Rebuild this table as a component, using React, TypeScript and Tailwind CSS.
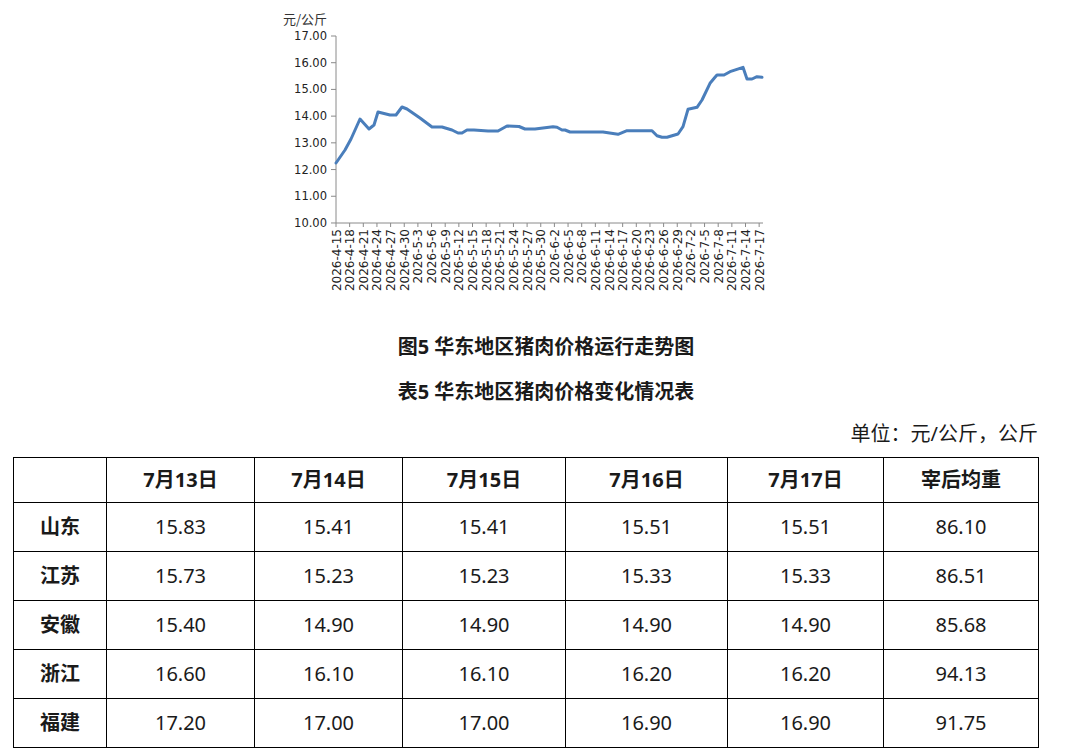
import React from "react";

const linePoints: [number, number][] = [
  [336, 163], [345, 150], [351, 139], [360, 119], [369, 129], [374, 125], [378, 112],
  [390, 115], [396, 115], [402, 107], [407, 109], [420, 118], [432, 127], [442, 127],
  [452, 130], [458, 133], [462, 133], [467, 130], [474, 130], [488, 131], [498, 131],
  [507, 126], [519, 126.5], [525, 129], [535, 129], [553, 126.7], [557, 127.3], [562, 130],
  [565, 130], [570, 132], [603, 132], [618, 134.3], [627, 130.7], [652, 130.7], [657, 135.7],
  [662, 137.3], [667, 137.3], [678, 134], [683, 126.7], [688, 109.3], [697, 107.3], [702, 100],
  [710, 83.3], [715, 77.3], [717, 75], [724, 75], [730, 71.7], [743, 67.3], [747, 79],
  [752, 79], [757, 76.7], [762, 77.3],
];

const yTicks = ["17.00", "16.00", "15.00", "14.00", "13.00", "12.00", "11.00", "10.00"];

const xLabels = [
  "2026-4-15", "2026-4-18", "2026-4-21", "2026-4-24", "2026-4-27", "2026-4-30",
  "2026-5-3", "2026-5-6", "2026-5-9", "2026-5-12", "2026-5-15", "2026-5-18",
  "2026-5-21", "2026-5-24", "2026-5-27", "2026-5-30", "2026-6-2", "2026-6-5",
  "2026-6-8", "2026-6-11", "2026-6-14", "2026-6-17", "2026-6-20", "2026-6-23",
  "2026-6-26", "2026-6-29", "2026-7-2", "2026-7-5", "2026-7-8", "2026-7-11",
  "2026-7-14", "2026-7-17",
];

const headers = ["7月13日", "7月14日", "7月15日", "7月16日", "7月17日", "宰后均重"];

const rows = [
  { name: "山东", values: ["15.83", "15.41", "15.41", "15.51", "15.51", "86.10"] },
  { name: "江苏", values: ["15.73", "15.23", "15.23", "15.33", "15.33", "86.51"] },
  { name: "安徽", values: ["15.40", "14.90", "14.90", "14.90", "14.90", "85.68"] },
  { name: "浙江", values: ["16.60", "16.10", "16.10", "16.20", "16.20", "94.13"] },
  { name: "福建", values: ["17.20", "17.00", "17.00", "16.90", "16.90", "91.75"] },
];

const colWidths = ["w-[148px]", "w-[148px]", "w-[163px]", "w-[162px]", "w-[156px]", "w-[155px]"];

const PriceChart = () => {
  const axisFont = "'DejaVu Sans', 'Noto Sans CJK SC', sans-serif";
  return (
    <svg width={500} height={300} viewBox="270 0 500 300" className="block">
      <text x={327} y={24} textAnchor="end" fontSize={13} fill="#333" fontFamily="'Noto Sans CJK SC', sans-serif">
        元/公斤
      </text>
      {yTicks.map((label, i) => {
        const y = 36 + i * 26.71;
        return (
          <g key={label}>
            <line x1={331} y1={y} x2={336} y2={y} stroke="#8a8a8a" strokeWidth={1} />
            <text x={327} y={y + 4} textAnchor="end" fontSize={11.5} fill="#222" fontFamily={axisFont}>
              {label}
            </text>
          </g>
        );
      })}
      <line x1={336} y1={36} x2={336} y2={223} stroke="#8a8a8a" strokeWidth={1} />
      <line x1={336} y1={223} x2={763} y2={223} stroke="#8a8a8a" strokeWidth={1} />
      {xLabels.map((label, i) => {
        const x = 336 + i * 13.65;
        return (
          <g key={label}>
            <line x1={x} y1={223} x2={x} y2={227} stroke="#8a8a8a" strokeWidth={1} />
            <text
              x={x + 4.5}
              y={229}
              textAnchor="end"
              fontSize={12}
              fill="#222"
              fontFamily={axisFont}
              transform={`rotate(-90 ${x + 4.5} 229)`}
            >
              {label}
            </text>
          </g>
        );
      })}
      <polyline
        points={linePoints.map(([x, y]) => `${x},${y}`).join(" ")}
        fill="none"
        stroke="#4a7ebb"
        strokeWidth={3}
        strokeLinejoin="round"
        strokeLinecap="round"
      />
    </svg>
  );
};

export default function App() {
  return (
    <div className="w-[1070px] h-[754px] bg-white text-[#1a1a1a] font-['Noto_Sans','Noto_Sans_CJK_SC',sans-serif] overflow-hidden">
      <div className="h-[333px] pl-[270px]">
        <PriceChart />
      </div>
      <div className="pl-[22px] flex justify-center text-[20px] leading-[28px] font-bold">
        图5 华东地区猪肉价格运行走势图
      </div>
      <div className="pl-[22px] mt-[17px] flex justify-center text-[20px] leading-[28px] font-bold">
        表5 华东地区猪肉价格变化情况表
      </div>
      <div className="mt-[16px] pr-[32px] flex justify-end text-[20px] leading-[24px]">
        单位：元/公斤，公斤
      </div>
      <div className="mt-[11px] pl-[13px]">
        <table className="table-fixed border-collapse w-[1025px] text-[20px]">
          <thead>
            <tr className="h-[45px]">
              <th className="w-[93px] border border-black"></th>
              {headers.map((h, i) => (
                <th key={h} className={`${colWidths[i]} border border-black font-bold text-center`}>
                  {h}
                </th>
              ))}
            </tr>
          </thead>
          <tbody>
            {rows.map((row) => (
              <tr key={row.name} className="h-[49px]">
                <td className="border border-black font-bold text-center">{row.name}</td>
                {row.values.map((v, i) => (
                  <td key={i} className="border border-black text-center">
                    {v}
                  </td>
                ))}
              </tr>
            ))}
          </tbody>
        </table>
      </div>
    </div>
  );
}
